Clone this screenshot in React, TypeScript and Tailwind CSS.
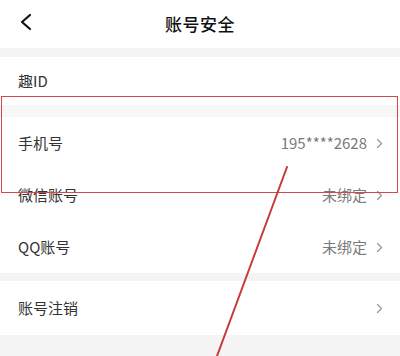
import React from 'react';

const Chevron = () => (
  <svg width="7" height="11" viewBox="0 0 7 11" className="ml-[9px]">
    <path d="M1.5 1.5 L5.5 5.5 L1.5 9.5" fill="none" stroke="#9a9a9a" strokeWidth="1.3" strokeLinecap="round" strokeLinejoin="round" />
  </svg>
);

const Row = ({ label, value, h = 'h-[52px]', arrow = true }: { label: string; value?: string; h?: string; arrow?: boolean }) => (
  <div className={`${h} bg-white flex items-center justify-between pl-[18px] pr-[17px]`}>
    <span className="text-[15px] text-[#333333]">{label}</span>
    {arrow && (
      <div className="flex items-center">
        {value && <span className="text-[15px] text-[#7a7a7a]">{value}</span>}
        <Chevron />
      </div>
    )}
  </div>
);

export default function App() {
  return (
    <div
      className="relative w-[400px] h-[356px] overflow-hidden bg-[#f4f4f4]"
      style={{ fontFamily: '"Noto Sans CJK SC", "Noto Sans", sans-serif' }}
    >
      <div className="relative h-[48px] bg-white flex items-center justify-center">
        <svg width="14" height="18" viewBox="0 0 14 18" className="absolute left-[19px] top-[13px]">
          <path d="M11 2 L3 9 L11 16" fill="none" stroke="#111" strokeWidth="2.2" strokeLinecap="round" strokeLinejoin="round" />
        </svg>
        <span className="text-[17px] font-medium text-[#111111] tracking-[0.5px]">账号安全</span>
      </div>
      <div className="h-[9px]" />
      <Row label="趣ID" h="h-[48px]" arrow={false} />
      <div className="h-[12px] bg-[#f7f7f7]" />
      <Row label="手机号" value="195****2628" />
      <Row label="微信账号" value="未绑定" />
      <Row label="QQ账号" value="未绑定" />
      <div className="h-[8px]" />
      <Row label="账号注销" h="h-[54px]" />

      {/* annotation */}
      <div className="absolute left-[1px] top-[96px] w-[397px] h-[97px] border-[1.5px] border-[#d6474a]" />
      <svg className="absolute left-0 top-0" width="400" height="356">
        <line x1="287" y1="167" x2="217" y2="356" stroke="#c73a3a" strokeWidth="2" strokeLinecap="round" />
      </svg>
    </div>
  );
}
